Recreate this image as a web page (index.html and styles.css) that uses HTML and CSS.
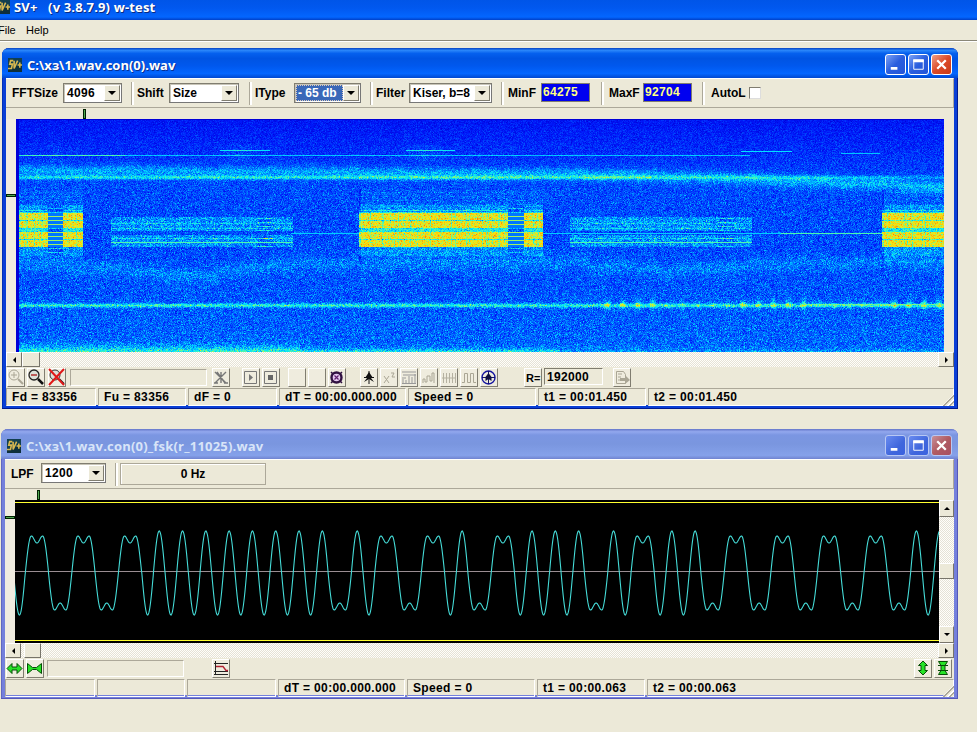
FILE: index.html
```html
<!DOCTYPE html>
<html lang="en">
<head>
<meta charset="utf-8">
<title>SV+</title>
<link rel="stylesheet" href="styles.css">
</head>
<body>
<svg width="0" height="0" class="defs"><defs>
<symbol id="logo" viewBox="0 0 16 16"><rect width="16" height="16" fill="#123f50"/><path d="M0 11l16-3v8H0z" fill="#0d2f3c"/><path d="M6 3H3L2 7h3l-1 5H0M7 3v9l4-9M11 8h5M13.500 5v6" fill="none" stroke="#d8b850" stroke-width="1.800"/></symbol>
<symbol id="min" viewBox="0 0 20 20"><path d="M5 14h7" stroke="#fff" stroke-width="3"/></symbol>
<symbol id="max" viewBox="0 0 20 20"><path d="M5 5.500h10M5 5v10h10V5" fill="none" stroke="#fff"/><path d="M4.500 6h11" stroke="#fff" stroke-width="3"/></symbol>
<symbol id="cls" viewBox="0 0 20 20"><path d="M5.500 5.500l9 9m0-9l-9 9" stroke="#fff" stroke-width="2.400"/></symbol>
</defs></svg>
<header class="apptitle"><svg class="logo"><use href="#logo"/></svg><span>SV+&nbsp;&nbsp; (v 3.8.7.9) w-test</span></header>
<nav class="menu"><span class="mfile">File</span><span class="mhelp">Help</span></nav>
<main>
<section class="win active">
  <div class="title"><svg class="logo"><use href="#logo"/></svg><h1>C:\хз\1.wav.con(0).wav</h1>
    <div class="ctl"><svg><use href="#min"/></svg><svg><use href="#max"/></svg><svg class="close"><use href="#cls"/></svg></div></div>
  <div class="client">
    <div class="bar">
      <div class="grp g1"><label>FFTSize</label><div class="combo"><span>4096</span><i></i></div></div>
      <div class="grp g2"><label>Shift</label><div class="combo"><span>Size</span><i></i></div></div>
      <div class="grp g3"><label>IType</label><div class="combo sel"><span>- 65 db</span><i></i></div></div>
      <div class="grp g4"><label>Filter</label><div class="combo"><span>Kiser, b=8</span><i></i></div></div>
      <div class="grp g5"><label>MinF</label><div class="num">64275</div></div>
      <div class="grp g6"><label>MaxF</label><div class="num">92704</div></div>
      <div class="grp g7"><label>AutoL</label><div class="check"></div></div>
    </div>
    <div class="ruler"><i class="tick tv"></i></div>
    <div class="plot"><div class="side"><i class="tick th"></i></div><canvas id="spec" width="928" height="233"></canvas></div>
    <div class="hscroll"><b class="left"></b><b class="thumb"></b><b class="right"></b></div>
    <div class="tools">
      <span class="btn"><svg viewBox="0 0 18 18"><g fill="none" stroke="#aaa695"><circle cx="7" cy="7" r="5"/><path d="M4 7h6M7 4v6"/><path d="M11 11l5 5" stroke-width="2"/></g></svg></span>
      <span class="btn"><svg viewBox="0 0 18 18"><circle cx="7" cy="7" r="5" fill="#dce0d8" stroke="#222" stroke-width="1.300"/><path d="M4 7h6" stroke="#b03030" stroke-width="1.500"/><path d="M11 11l5 5" stroke="#111" stroke-width="2.500"/></svg></span>
      <span class="btn"><svg viewBox="0 0 18 18"><circle cx="7" cy="7" r="5" fill="#dce0d8" stroke="#333"/><path d="M11 11l5 5" stroke="#222" stroke-width="2"/><path d="M1 1l15 16M16 1L1 17" stroke="#e01818" stroke-width="2"/></svg></span>
      <span class="well w1"></span>
      <span class="btn m6"><svg viewBox="0 0 18 18"><path d="M3 4l11 11M14 4L3 15M5 4l8 11M9 8V4M9 11v4M2 15h4M12 15h4" stroke="#777" stroke-width="1.400"/></svg></span>
      <span class="btn m11"><svg viewBox="0 0 18 18"><path d="M2.500 3.500h12v12h-12z" fill="none" stroke="#777"/><path d="M7 6v7l4-3.500z" fill="#777"/></svg></span>
      <span class="btn"><svg viewBox="0 0 18 18"><path d="M2.500 3.500h12v12h-12z" fill="none" stroke="#777"/><path d="M6 7h5v5H6z" fill="#666"/></svg></span>
      <span class="btn m7"></span>
      <span class="btn"></span>
      <span class="btn"><svg viewBox="0 0 18 18"><circle cx="8.500" cy="9.500" r="5" fill="#e6c8f0" stroke="#301040" stroke-width="2.400"/><path d="M6.500 7.500l4 4m0-4l-4 4" stroke="#602070" stroke-width="1.200"/><path d="M3 4l2 2M12 13l2 2M14 4l-2 2M3 15l2-2" stroke="#301040" stroke-width="1.500"/></svg></span>
      <span class="btn m12"><svg viewBox="0 0 18 18"><path d="M9 3v13M4 9.500h10" stroke="#111"/><path d="M9 4l4 6h-2l3 4-5-3-5 3 3-4H5z" fill="#111"/></svg></span>
      <span class="btn"><svg viewBox="0 0 18 18"><path d="M4 8l5 7m0-7l-5 7M11 5h3l-2 4h3" fill="none" stroke="#aaa695"/></svg></span>
      <span class="btn"><svg viewBox="0 0 18 18"><path d="M2 4h14M3 7h13M2 10h4M3 15v-4M6 15v-3M9 15V8M12 15V9M15 15V6M2 15.500h14" fill="none" stroke="#999"/></svg></span>
      <span class="btn"><svg viewBox="0 0 18 18"><path d="M3 15v-4h2v3h2V8h3v5h2V5h2v10" fill="none" stroke="#aaa695"/></svg></span>
      <span class="btn"><svg viewBox="0 0 18 18"><path d="M3.500 5v10M6.500 5v10M9.500 5v10M12.500 5v10M15.500 5v10M2 10h14" fill="none" stroke="#b5b1a1"/></svg></span>
      <span class="btn"><svg viewBox="0 0 18 18"><path d="M2 14.500h2.500v-9h3v9h3v-9h3v9H16" fill="none" stroke="#aaa695"/></svg></span>
      <span class="btn"><svg viewBox="0 0 18 18"><circle cx="8.500" cy="9.500" r="6.500" fill="none" stroke="#1515a0" stroke-width="1.400"/><path d="M8.500 3v13M2 9.500h13" stroke="#14146a"/><path d="M8.500 5l3 4 0 4-3-2-3 2V9z" fill="#101040"/></svg></span>
      <span class="btn req">R=</span><span class="rate">192000</span>
      <span class="btn m10"><svg viewBox="0 0 18 18"><path d="M3.500 3.500h7l2 3v9h-9zM5 6h4M5 9h3M5 12h3" fill="none" stroke="#aaa695"/><path d="M7 10h5V7l5 5-5 4v-3H7z" fill="#aaa695"/></svg></span>
    </div>
    <div class="status"><span class="c1">Fd = 83356</span><span class="c2">Fu = 83356</span><span class="c3">dF = 0</span><span class="c4">dT = 00:00.000.000</span><span class="c5">Speed = 0</span><span class="c6">t1 = 00:01.450</span><span class="c7">t2 = 00:01.450</span></div>
  </div>
</section>
<section class="win inactive">
  <div class="title"><svg class="logo"><use href="#logo"/></svg><h1>C:\хз\1.wav.con(0)_fsk(r_11025).wav</h1>
    <div class="ctl"><svg><use href="#min"/></svg><svg><use href="#max"/></svg><svg class="close"><use href="#cls"/></svg></div></div>
  <div class="client">
    <div class="bar">
      <div class="grp h1"><label>LPF</label><div class="combo"><span>1200</span><i></i></div></div>
      <div class="grp h2"><div class="hz">0 Hz</div></div>
    </div>
    <div class="ruler"><i class="tick tv"></i></div>
    <div class="plot"><div class="side"><i class="tick th"></i></div>
      <svg class="scope" viewBox="15 500 924 143"><path d="M15 502.500h924M15 640.500h924" stroke="#ffff30"/><path d="M15 571.500h924" stroke="#9a8d92"/><path id="wave" fill="none" stroke="#45dcd8" stroke-width="1.100"/></svg>
      <div class="vscroll"><b class="up"></b><b class="vthumb"></b><b class="down"></b></div></div>
    <div class="hscroll"><b class="left"></b><b class="thumb"></b><b class="right"></b></div>
    <div class="tools">
      <span class="btn"><svg viewBox="0 0 18 18"><path d="M1 9.500l5-5v3.500h5V4.500l5 5-5 5V11H6v3.500z" fill="#27e327" stroke="#064d06"/></svg></span>
      <span class="btn"><svg viewBox="0 0 18 18"><path d="M1.500 4.500l5 4h4l5-4v10l-5-4h-4l-5 4z" fill="#27e327" stroke="#064d06"/></svg></span>
      <span class="well w2"></span>
      <span class="btn graph"><svg viewBox="0 0 18 18"><path d="M3.500 2v14M2 4.500h14M2 12.500h14M2 15.500h14" stroke="#222"/><path d="M4 7.500h7l3 4h2" fill="none" stroke="#b02030" stroke-width="1.300"/></svg></span>
      <span class="btn vert"><svg viewBox="0 0 18 18"><path d="M9 2l4.500 4.500H11v5h2.500L9 16l-4.500-4.500H7v-5H4.500z" fill="#27e327" stroke="#064d06"/></svg></span>
      <span class="btn"><svg viewBox="0 0 18 18"><path d="M4.500 2.500h9L11 6.500v5l2.500 4h-9l2.500-4v-5z" fill="#27e327" stroke="#064d06"/><path d="M4 6.500h10M4 11.500h10" stroke="#064d06"/></svg></span>
    </div>
    <div class="status"><span class="c1"></span><span class="c2"></span><span class="c3"></span><span class="c4">dT = 00:00.000.000</span><span class="c5">Speed = 0</span><span class="c6">t1 = 00:00.063</span><span class="c7">t2 = 00:00.063</span></div>
  </div>
</section>
</main>
<script src="plots.js"></script>
</body>
</html>
```
FILE: styles.css
```css
* { box-sizing: border-box; }
body { margin: 0; width: 977px; height: 732px; overflow: hidden; background: #ece9d8; font: bold 12px "Liberation Sans", sans-serif; color: #000; }
.defs { position: absolute; }
svg { display: block; }
.logo { width: 16px; height: 14px; flex: none; }
.apptitle { height: 20px; margin-left: -5px; display: flex; align-items: flex-start; background: linear-gradient(#0055e8, #0158ef 40%, #0366ff 85%, #0040c8); color: #fff; font: bold 13px/14px "Open Sans", sans-serif; letter-spacing: .15px; text-shadow: 1px 1px #0a2a80; }
.apptitle span { margin-left: 3px; }
.menu { height: 22px; display: flex; font: 11px/20px "Liberation Sans", sans-serif; border-bottom: 1px solid #fff; box-shadow: inset 0 -1px #8a8778; }
.mfile { width: 26px; margin-left: -2px; }
.mhelp { margin-left: 2px; }
main { padding: 6px 0 0 2px; }
.win { width: 956px; height: 361px; border-radius: 7px 7px 0 0; display: flex; flex-direction: column; padding: 0 4px 4px; }
.active { background: #0a3fd6; box-shadow: inset -1px -1px #001a90, inset 1px 0 #0030b8; }
.inactive { width: 957px; height: 270px; margin: 20px 0 0 -1px; background: #7480dc; box-shadow: inset -1px -1px #5558b8, inset 1px 0 #6068c0; }
.title { height: 30px; flex: none; margin: 0 -4px; padding: 1px 6px 0 5px; border-radius: 7px 7px 0 0; display: flex; align-items: center; color: #fff; background: linear-gradient(#0842c0, #2a86fa 8%, #0560ee 18%, #0054e3 35%, #0058ee 60%, #0366ff 85%, #0048d0); }
.inactive .title { background: linear-gradient(#6476c8, #92a8ee 9%, #7b96e2 20%, #7a96df 50%, #85a1ea 88%, #7083d0); color: #d8e4f8; }
.title h1 { margin: 3px 0 0 4px; font: bold 13px/16px "Open Sans", sans-serif; text-shadow: 1px 1px #0a2f90; white-space: pre; }
.inactive h1 { text-shadow: none; letter-spacing: .2px; }
.title .logo { margin-top: 2px; }
.ctl { display: flex; gap: 2px; margin-left: auto; padding-top: 2px; }
.ctl svg { width: 21px; height: 21px; border: 1px solid #fff; border-radius: 3px; background: linear-gradient(135deg, #7ca2f5, #2a5ede 50%, #2455d8); }
.ctl .close { background: linear-gradient(135deg, #f0a088, #dc4a28 50%, #c83a18); }
.inactive .ctl svg { border-color: #b8c8f4; background: linear-gradient(135deg, #6a8cf0, #3f66dc 60%, #3a62e0); }
.inactive .ctl .close { background: linear-gradient(135deg, #c89098, #b05a62 50%, #a85060); }
.client { flex: 1; background: #ece9d8; display: flex; flex-direction: column; min-height: 0; }
.bar { height: 30px; display: flex; flex: none; border: 1px solid #fff; border-left: 0; border-right-color: #aca899; border-bottom-color: #aca899; }
.grp { display: flex; flex: none; position: relative; height: 28px; padding: 4px 0 0 6px; }
.inactive .grp { padding-top: 3px; }
.grp + .grp::before { content: ""; position: absolute; left: 0; top: 3px; width: 2px; height: 23px; border-left: 1px solid #aca899; background: #fff; }
.grp label { line-height: 20px; white-space: nowrap; }
.g1 { width: 125px; } .g2 { width: 118px; } .g3 { width: 121px; } .g4 { width: 131px; } .g5 { width: 100px; padding-left: 7px; } .g6 { width: 101px; padding-left: 8px; } .g7 { padding-left: 9px; }
.g1 label { width: 51px; } .g2 label { width: 32px; } .g3 label { width: 39px; } .g4 label { width: 33px; } .g5 label { width: 33px; } .g6 label { width: 34px; } .g7 label { width: 38px; }
.g1 .combo { width: 59px; } .g2 .combo { width: 70px; } .g3 .combo { width: 67px; } .g4 .combo { width: 83px; }
.h1 { width: 110px; } .h1 label { width: 30px; line-height: 22px; } .h1 .combo { width: 65px; }
.combo { height: 20px; background: #fff; border: 1px solid #807d70; border-right-color: #777; border-bottom-color: #777; box-shadow: inset 1px 1px #c8c5b8; display: flex; padding: 1px; }
.combo span { flex: 1; line-height: 16px; padding-left: 2px; white-space: nowrap; }
.h1 .combo span, .g1 .combo span { letter-spacing: .3px; }
.combo.sel span { background: #3a68b8; color: #fff; outline: 1px dotted #dcb; outline-offset: -1px; }
.combo i { width: 16px; background: #ece9d8; border: 1px solid #fff; border-right-color: #807d70; border-bottom-color: #807d70; display: grid; place-items: center; }
.combo i::before { content: ""; border: 4px solid transparent; border-top-color: #000; border-bottom: 0; }
.num { width: 49px; height: 19px; background: #0000f0; color: #ffff80; border: 1px solid #807d70; padding-left: 1px; line-height: 16px; letter-spacing: .35px; }
.check { width: 12px; height: 12px; margin-top: 4px; background: #fff; border: 1px solid #807d70; border-right-color: #ddd; border-bottom-color: #ddd; }
.hz { width: 146px; height: 22px; margin: 0 0 0 -1px; border: 1px solid #aca899; box-shadow: inset 1px 1px #fff; text-align: center; line-height: 20px; }
.ruler { height: 11px; flex: none; position: relative; background: #ece9d8; }
.tick { position: absolute; border: 1px solid #002000; background: #50a850; }
.tv { left: 77px; top: 1px; width: 3px; height: 10px; }
.inactive .tv { left: 32px; }
.th { right: 0; top: 75px; width: 10px; height: 3px; }
.inactive .th { top: 16px; }
.plot { display: flex; flex: none; }
.side { width: 10px; position: relative; background: #f0ece0; }
canvas { display: block; }
.scope { width: 924px; height: 143px; background: #000; }
.vscroll { width: 15px; height: 143px; display: flex; flex-direction: column; }
.vscroll, .hscroll { background: repeating-conic-gradient(#e5e2d6 0 25%, #fffefa 0 50%) 0 0 / 2px 2px; }
.hscroll { height: 15px; flex: none; display: flex; }
.hscroll b, .vscroll b { flex: none; background: #ece9d8; border: 1px solid #fff; border-right-color: #77746a; border-bottom-color: #77746a; display: grid; place-items: center; }
.left, .right, .thumb { width: 16px; height: 15px; } .thumb { width: 18px; } .right { margin-left: auto; }
.inactive .thumb { width: 17px; margin-left: 3px; }
.up, .down, .vthumb { width: 15px; height: 16px; } .up, .down { height: 17px; } .vthumb { margin-top: 46px; } .down { margin-top: auto; }
.left::before, .right::before, .up::before, .down::before { content: ""; border: 3px solid transparent; }
.left::before { border-left: 0; border-right-color: #000; } .right::before { border-right: 0; border-left-color: #000; }
.up::before { border-top: 0; border-bottom-color: #000; } .down::before { border-bottom: 0; border-top-color: #000; }
.tools { height: 21px; flex: none; display: flex; gap: 2px; padding: 1px 2px 0 1px; }
.btn { width: 18px; height: 19px; flex: none; background: #efecde; border: 1px solid #fff; border-right-color: #807d70; border-bottom-color: #807d70; }
.active .btn:nth-child(3) { margin-left: 1px; }
.btn svg { width: 18px; height: 18px; margin: -1px; }
.well { height: 17px; margin: 1px 0 0 2px; border: 1px solid #aca899; border-right-color: #fff; border-bottom-color: #fff; }
.w1, .w2 { width: 137px; } .w2 { margin-left: 1px; }
.m6 { margin-left: 3px; } .m10 { margin-left: 8px; } .m11 { margin-left: 10px; } .m7 { margin-left: 6px; } .m12 { margin-left: 12px; }
.req { margin-left: 24px; line-height: 19px; font-size: 11px; padding-left: 1px; white-space: nowrap; }
.rate { width: 59px; height: 17px; border: 1px solid #807d70; border-right-color: #fff; border-bottom-color: #fff; padding-left: 2px; line-height: 17px; letter-spacing: .35px; }
.graph { margin-left: 26px; } .vert { margin-left: auto; }
.status { flex: 1; display: flex; gap: 2px; position: relative; }
.status span { border: 1px solid #aca899; border-right-color: #fff; border-bottom-color: #fff; padding-left: 5px; line-height: 16px; white-space: nowrap; letter-spacing: .35px; }
.c1 { width: 90px; } .c2 { width: 88px; } .c3 { width: 89px; } .c4 { width: 127px; } .c5 { width: 128px; } .c6 { width: 108px; } .c7 { flex: 1; }
.status::after { content: ""; position: absolute; right: 0; bottom: 0; width: 12px; height: 12px; clip-path: polygon(100% 0, 100% 100%, 0 100%); background: repeating-linear-gradient(135deg, #fff 0 1px, #aca899 1px 2.500px, #ece9d8 2.500px 4px); }
```
FILE: plots.js
```js
let seed = 12345;
function rnd() { seed = (seed * 1664525 + 1013904223) >>> 0; return seed / 4294967296; }
function gauss() { return rnd() + rnd() + rnd() - 1.5; }

// Palette from quiet to loud.
const stops = [[0, 0, 0, 215], [.14, 0, 25, 250], [.32, 0, 105, 255], [.5, 0, 225, 255], [.64, 90, 250, 160], [.77, 235, 235, 30], [.9, 255, 200, 0], [1, 245, 120, 20]];
function color(v) {
  v = Math.max(0, Math.min(1, v));
  for (let i = 1; i < stops.length; i++) if (v <= stops[i][0]) {
    const a = stops[i - 1], b = stops[i], t = (v - a[0]) / (b[0] - a[0]);
    return [1, 2, 3].map(k => a[k] + (b[k] - a[k]) * t);
  }
}
const ctx = document.getElementById('spec').getContext('2d');
const img = ctx.createImageData(928, 233);
const bell = (d, w) => Math.exp(-d * d / (w * w));
const bursts = [[19, 83, 48, 63], [359, 543, 508, 524], [882, 944, 999, 999]];
const echoes = [[111, 293, 257, 273], [570, 752, 718, 734]];
const columns = Array.from({ length: 977 }, gauss);
let wander = 0;
for (let x = 16; x < 944; x++) {
  wander = wander * .85 + gauss() * 2.2;
  const drift = (x < 330 ? 264 + 11 * bell(x - 185, 75) : x < 560 ? 264 : 262 + 7 * bell(x - 690, 80)) + wander;
  const upper = (x > 620 ? 174 + (x - 620) * .037 : 170 + x * .006) + wander * .4;
  for (let y = 119; y < 352; y++) {
    let v = .12 + Math.min(1, (y - 119) / 65) * .13 + Math.max(0, y - 255) * .0006;
    v += gauss() * (.09 + .07 * Math.min(1, (y - 119) / 90));
    v += (x > 650 ? .14 : .24) * bell(y - 177, 2) + .19 * bell(y - upper, 6);
    v += .09 * bell(y - drift, 7);
    v += .29 * bell(y - 305, 2) + (x > 600 ? .24 * bell(y - 304, 5) * Math.max(0, Math.sin(x / 2.4)) * (x < 660 || x > 735 && x < 810 || x > 880 ? 1 : .3) : 0);
    v += .3 * bell(y - 354, x < 300 ? 8 : 5) * (x < 560 ? 1 : .4);
    if (y === 155 && x < 750) v = x < 125 ? .55 + .1 * rnd() : .42 + .08 * rnd();
    if (y === 150 && (x > 219 && x < 270 || x > 405 && x < 455) || y === 151 && x > 740 && x < 792) v = .5;
    if (y === 153 && x > 840 && x < 880) v = .46;
    if (y > 144 && y < 162) v += .1 * rnd() * (bell(x - 55, 4) + bell(x - 425, 20) + bell(x - 240, 15));
    if (y === 233 && x > 290) v = x > 780 ? .62 : .47;
    if (y === 304 && x > 800) v = .6 + .1 * rnd();
    for (const [a, b, s, e] of bursts) if (x >= a && x < b && y > 189 && y < 263) {
      const gap = x >= s && x < e;
      const core = y >= 213 && y < 228 || y >= 232 && y < 247;
      const stripe = y % 4 === 0;
      if (core) v = gap ? (stripe ? .7 : .34) : .81 + gauss() * .16 - (columns[x] > .5 ? .12 : 0);
      else if (y >= 205 && y < 213 || y >= 228 && y < 232 || y >= 247 && y < 256) v += gap ? (stripe ? .22 : .02) : .13 + (y > 227 && y < 232 ? .16 : 0) + (y === 210 || y === 212 ? .15 : 0);
      else v += (stripe ? .06 : .03);
      if ((y === 220 || y === 239) && !gap) v -= .24;
      if (a > 19 && x - a < 2) v -= .12;
    }
    for (const [a, b, s, e] of echoes) if (x >= a && x < b && y >= 217 && y < 247) {
      const inside = y < 231 || y >= 235;
      if (inside) v += .13 + gauss() * .08;
      if (y === 223 || y === 228 || y === 238) v += .1;
      if (x >= s && x < e && inside) v += y % 4 === 2 ? .14 : -.07;
      if (y === 242) v = .62;
    }
    if (x < 19 || y === 119) v = 0;
    const c = color(v), o = ((y - 119) * 928 + x - 16) * 4;
    img.data[o] = c[0]; img.data[o + 1] = c[1]; img.data[o + 2] = c[2]; img.data[o + 3] = 255;
  }
}
ctx.putImageData(img, 0, 0);

// Half cycles of the demodulated signal: 1 is a short one, 2 a long one.
const halves = '1' + '22222' + '1'.repeat(16) + '211222' + '1122' + '111111' + '2112' + '1111' + '222222222' + '111';
const unit = 11.65;
let t = 13.6, up = false, d = '';
for (const h of halves) {
  const w = unit * h, k = up ? -1 : 1;
  for (let p = 0; p < w; p += .5) {
    const edge = Math.min(p, w - p);
    let a;
    if (h === '1') a = 42 * Math.sin(Math.PI * p / w);
    else a = edge < 6 ? 37 * Math.sin(Math.PI / 2 * edge / 6) : 33.5 + 3.5 * Math.cos(Math.PI * (edge - 6) / (w / 2 - 6));
    d += (d ? 'L' : 'M') + (t + p).toFixed(1) + ' ' + (573 + k * a).toFixed(1);
  }
  t += w; up = !up;
}
document.getElementById('wave').setAttribute('d', d);
```
